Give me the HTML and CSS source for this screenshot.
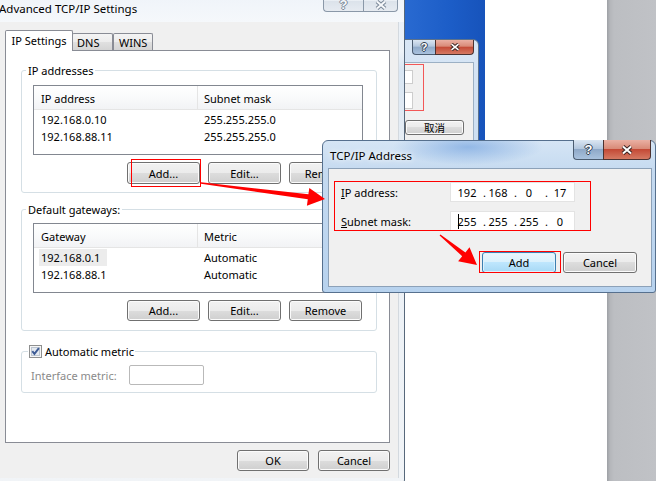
FILE: index.html
```html
<!DOCTYPE html>
<html lang="en">
<head>
<meta charset="utf-8">
<title>Advanced TCP/IP Settings</title>
<link rel="stylesheet" href="styles.css">
</head>
<body>
<div class="desk-blue"></div>
<div class="desk-gray"></div>

<div class="win win-back">
  <div class="back-title">
    <div class="caps back-caps">
      <span class="cap cap-help act-help">?</span>
      <span class="cap cap-close act-close"><svg width="12" height="8" viewBox="0 0 12 8"><path d="M2.5 1.2L9.5 6.8M9.5 1.2L2.5 6.8" stroke="#3b2321" stroke-width="3.6"/><path d="M2.5 1.2L9.5 6.8M9.5 1.2L2.5 6.8" stroke="#fff" stroke-width="1.6"/></svg></span>
    </div>
  </div>
  <div class="back-client">
    <div class="back-red">
      <div class="back-input"></div>
      <div class="back-input b2"></div>
    </div>
    <div class="btn back-btn">取消</div>
  </div>
</div>

<div class="win win-main">
  <div class="main-title">
    <span class="title">Advanced TCP/IP Settings</span>
    <div class="caps main-caps">
      <span class="cap cap-help ina-help">?</span>
      <span class="cap cap-close ina-close"><svg width="14" height="10" viewBox="0 0 14 10"><path d="M3 1.5L11 8.5M11 1.5L3 8.5" stroke="#7a8898" stroke-width="4"/><path d="M3 1.5L11 8.5M11 1.5L3 8.5" stroke="#f7f9fb" stroke-width="2"/></svg></span>
    </div>
  </div>
  <div class="main-client">
    <div class="tabs">
      <div class="tab tab-sel">IP Settings</div>
      <div class="tab tab-dns">DNS</div>
      <div class="tab tab-wins">WINS</div>
    </div>
    <div class="panel">
      <fieldset class="group g1">
        <legend>IP addresses</legend>
        <div class="gbody">
          <div class="lv">
            <div class="lv-head"><div class="c1">IP address</div><div class="c2">Subnet mask</div></div>
            <div class="lv-rows">
              <div class="lv-row"><div class="c1">192.168.0.10</div><div class="c2">255.255.255.0</div></div>
              <div class="lv-row"><div class="c1">192.168.88.11</div><div class="c2">255.255.255.0</div></div>
            </div>
          </div>
          <div class="btnrow">
            <button class="btn" type="button">Add...</button>
            <button class="btn" type="button">Edit...</button>
            <button class="btn" type="button">Remove</button>
          </div>
        </div>
      </fieldset>
      <fieldset class="group g2">
        <legend>Default gateways:</legend>
        <div class="gbody">
          <div class="lv">
            <div class="lv-head"><div class="c1">Gateway</div><div class="c2">Metric</div></div>
            <div class="lv-rows">
              <div class="lv-row"><div class="c1"><span class="sel">192.168.0.1</span></div><div class="c2">Automatic</div></div>
              <div class="lv-row"><div class="c1">192.168.88.1</div><div class="c2">Automatic</div></div>
            </div>
          </div>
          <div class="btnrow">
            <button class="btn" type="button">Add...</button>
            <button class="btn" type="button">Edit...</button>
            <button class="btn" type="button">Remove</button>
          </div>
        </div>
      </fieldset>
      <fieldset class="group g3">
        <legend><svg class="chk" width="13" height="13" viewBox="0 0 13 13"><rect x="0.5" y="0.5" width="12" height="12" fill="#f6f6f6" stroke="#8e8f8f"/><rect x="2.5" y="2.5" width="8" height="8" fill="#e4e9f0" stroke="#bcc5d0"/><path d="M3.3 6.2L5.4 8.9L9.9 3.1" fill="none" stroke="#3d5b95" stroke-width="1.9"/></svg><span>Automatic metric</span></legend>
        <div class="gbody">
          <span class="lbl">Interface metric:</span>
          <span class="metric-input"></span>
        </div>
      </fieldset>
    </div>
    <div class="dlgbtns">
      <button class="btn" type="button">OK</button>
      <button class="btn" type="button">Cancel</button>
    </div>
  </div>
</div>

<div class="win win-pop">
  <div class="pop-title">
    <span class="title">TCP/IP Address</span>
    <div class="caps pop-caps">
      <span class="cap cap-help act-help">?</span>
      <span class="cap cap-close act-close"><svg width="14" height="10" viewBox="0 0 14 10"><path d="M3 1.5L11 8.5M11 1.5L3 8.5" stroke="#3b2321" stroke-width="4"/><path d="M3 1.5L11 8.5M11 1.5L3 8.5" stroke="#fff" stroke-width="2"/></svg></span>
    </div>
  </div>
  <div class="pop-client">
    <div class="frow">
      <span class="flabel"><u>I</u>P address:</span>
      <div class="ipbox"><span class="seg">192</span><span class="dot">.</span><span class="seg">168</span><span class="dot">.</span><span class="seg">0</span><span class="dot">.</span><span class="seg">17</span></div>
    </div>
    <div class="frow">
      <span class="flabel"><u>S</u>ubnet mask:</span>
      <div class="ipbox"><span class="seg"><span class="caret"></span>255</span><span class="dot">.</span><span class="seg">255</span><span class="dot">.</span><span class="seg">255</span><span class="dot">.</span><span class="seg">0</span></div>
    </div>
    <div class="pop-btns">
      <button class="btn btn-default" type="button">Add</button>
      <button class="btn" type="button">Cancel</button>
    </div>
  </div>
</div>

<div class="mark mark-add"></div>
<div class="mark mark-fields"></div>
<div class="mark mark-popadd"></div>

<svg class="arrows" width="656" height="481" viewBox="0 0 656 481">
  <polygon fill="#ff0000" points="201,182.3 308.4,194.3 309.3,187.9 325,199 306.9,205.7 307.8,199.3 200.9,183.7"/>
  <polygon fill="#ff0000" points="440.4,234.5 465.4,252.4 469.5,247.3 477,265 458.1,261.3 462.2,256.2 439.6,235.5"/>
</svg>
</body>
</html>
```

FILE: styles.css
```css
* { box-sizing: border-box; }
html, body { margin: 0; padding: 0; }
body {
  width: 656px;
  height: 481px;
  overflow: hidden;
  position: relative;
  background: #fff;
  font-family: "Noto Sans", "Liberation Sans", sans-serif;
  font-size: 11px;
  line-height: 15px;
  color: #000;
}

/* desktop background */
.desk-blue {
  position: absolute;
  left: 400px;
  top: 0;
  width: 85px;
  height: 220px;
  background: linear-gradient(90deg, #2a6bd2, #1c5dc7 60%, #1753bb);
}
.desk-gray {
  position: absolute;
  left: 607px;
  top: 0;
  width: 49px;
  height: 481px;
  background: linear-gradient(90deg, #9da0a5 0, #b4b6ba 3px, #bcbec2 7px, #c0c2c6);
}

/* windows */
.win {
  position: absolute;
  display: flex;
  flex-direction: column;
}
.title { font-size: 11.5px; line-height: 15px; white-space: nowrap; }

/* caption buttons */
.caps { display: flex; align-items: flex-start; }
.cap {
  display: flex;
  align-items: center;
  justify-content: center;
  border: 1px solid #4b5c70;
  border-top: none;
  font-weight: 700;
  font-size: 13px;
  line-height: 13px;
  font-family: "Liberation Sans", sans-serif;
}
.cap-help { border-right: none; border-radius: 0 0 0 4px; }
.cap-close { border-radius: 0 0 4px 0; }
.act-help {
  color: #fff;
  background: linear-gradient(#dbe6f2, #b3c7de 45%, #8fa9c8 50%, #a9c2de);
  text-shadow: 1px 0 #2f3d4f, -1px 0 #2f3d4f, 0 1px #2f3d4f, 0 -1px #2f3d4f;
}
.act-close {
  background: linear-gradient(#eab0a3, #d98b78 45%, #c44a36 50%, #d57a63);
  border-color: #4c3230;
}
.ina-help {
  color: #f6f8fa;
  background: linear-gradient(#f8fafc, #e8edf3 50%, #dce3eb 50%, #e6ebf1);
  border-color: #8a98a8;
  text-shadow: 1px 0 #7a8898, -1px 0 #7a8898, 0 1px #7a8898, 0 -1px #7a8898;
  padding-top: 6px;
}
.ina-close {
  background: linear-gradient(#f8fafc, #e8edf3 50%, #dce3eb 50%, #e6ebf1);
  border-color: #8a98a8;
  padding-top: 6px;
}

/* buttons */
.btn {
  display: flex;
  align-items: center;
  justify-content: center;
  padding: 0;
  margin: 0;
  border: 1px solid #707070;
  border-radius: 3px;
  background: linear-gradient(#f2f2f2, #ebebeb 50%, #dddddd 50%, #cfcfcf);
  box-shadow: inset 0 0 0 1px #fbfbfb;
  font: inherit;
  color: #000;
}
.btn-default {
  border-color: #3c7fb1;
  background: linear-gradient(#eaf6fd, #d9f0fc 50%, #bee6fd 50%, #a7d9f5);
  box-shadow: inset 0 0 0 1px #dff2fd;
}

/* background dialog */
.win-back {
  left: 330px;
  top: 39px;
  width: 149px;
  height: 160px;
  border: 1px solid #5d728b;
  border-radius: 6px;
  padding: 0 4px 0 5px;
  background: linear-gradient(#d8e6f5, #c8dcf1);
}
.back-title { height: 22px; display: flex; justify-content: flex-end; }
.back-caps .cap { height: 15px; font-size: 11px; }
.back-caps .cap-help { width: 23px; }
.back-caps .cap-close { width: 39px; }
.back-client {
  flex: 1;
  background: #f0f0f0;
  border: 1px solid #9cb0c4;
  display: flex;
  flex-direction: column;
  align-items: flex-end;
}
.back-red {
  border: 1px solid #f25757;
  margin: 1px 49px 0 0;
  padding: 5px 10px 1px 30px;
}
.back-input { width: 30px; height: 14px; background: #fff; border: 1px solid #cdcdcd; }
.back-input.b2 { height: 17px; margin-top: 8px; }
.back-btn {
  width: 59px;
  height: 15px;
  margin: 9px 9px 0 0;
  font-family: "Noto Sans CJK SC", sans-serif;
  font-size: 10.5px;
  line-height: 13px;
}

/* main window */
.win-main {
  left: -8px;
  top: -10px;
  width: 413px;
  height: 497px;
  border: 1px solid #57687b;
  border-radius: 7px;
  padding: 0 5px 8px 7px;
  background:
    radial-gradient(ellipse 40px 9px at 228px 4px, rgba(150, 185, 225, 0.35), transparent),
    linear-gradient(#e6eef7, #eef3f8 60px, #d9e6f3 80px, #e9eff5 160px, #f1f4f7);
}
.main-title {
  height: 31px;
  display: flex;
  justify-content: space-between;
  align-items: flex-start;
  background: linear-gradient(#eef3f9, #f5f8fb);
  margin: 0 -5px 0 -7px;
  padding: 0 5px 0 7px;
}
.main-title .title { margin: 10px 0 0 -1px; }
.main-caps { margin: 1px 1px 0 0; }
.main-caps .cap { height: 20px; }
.main-caps .cap-help { width: 40px; }
.main-caps .cap-close { width: 35px; }

.main-client {
  flex: 1;
  background: #f0f0f0;
  border-right: 1px solid #d3d9df;
  display: flex;
  flex-direction: column;
  padding: 8px 8px 0 5px;
}

/* tabs */
.tabs { display: flex; align-items: flex-end; height: 20px; }
.tab {
  height: 17px;
  border: 1px solid #898c95;
  border-bottom: none;
  background: linear-gradient(#f4f4f4, #ececec 50%, #e0e0e0 50%, #d4d4d4);
  display: flex;
  align-items: center;
  padding-left: 4px;
  border-radius: 2px 2px 0 0;
}
.tab-sel {
  position: relative;
  z-index: 2;
  width: 68px;
  height: 21px;
  margin-bottom: -1px;
  padding: 0 0 1px 0;
  justify-content: center;
  background: #fff;
}
.tab-dns { width: 41px; margin-left: -1px; }
.tab-wins { width: 40px; padding-left: 5px; }

.panel {
  height: 393px;
  border: 1px solid #898c95;
  background: #fff;
  padding: 0 0 0 15px;
}

/* group boxes */
.group {
  width: 356px;
  min-width: 0;
  margin: 12px 0 0 0;
  padding: 0;
  border: 1px solid #d5dfe5;
  border-radius: 3px;
}
.group legend { margin-left: 4px; padding: 0 2px; line-height: 15px; }
.g2 { margin-top: 9px; }
.g3 { margin-top: 13px; }
.gbody { padding: 7px 13px 8px 11px; }
.g2 .gbody { padding: 6px 13px 9px 11px; }

.lv { height: 70px; border: 1px solid #828790; background: #fff; }
.lv-head {
  display: flex;
  height: 24px;
  border-bottom: 1px solid #e5e5e5;
  background: linear-gradient(#ffffff, #f9fafb 50%, #f2f3f5);
}
.lv-head > div { display: flex; align-items: center; padding-top: 1px; }
.lv-head .c1 { border-right: 1px solid #e5e5e5; }
.c1 { width: 164px; padding-left: 7px; flex: none; }
.c2 { padding-left: 6px; }
.lv-rows { padding-top: 1px; }
.lv-row { display: flex; height: 17px; align-items: center; }
.lv-row > div { display: flex; align-items: center; height: 17px; }
.sel { background: #ececec; margin-left: -2px; padding: 1px 7px 1px 2px; }

.btnrow { display: flex; justify-content: flex-end; gap: 8px; margin: 7px 1px 0 0; }
.btnrow .btn { width: 73px; height: 22px; }
.g2 .btnrow .btn { height: 21px; }

.g3 legend {
  margin-left: 6px;
  padding: 0 1px;
  display: flex;
  align-items: center;
  gap: 3px;
}
.chk { display: block; }
.g3 .gbody { display: flex; align-items: center; padding: 6px 0 7px 9px; }
.lbl { width: 98px; color: #8a8a8a; }
.metric-input {
  width: 75px;
  height: 20px;
  border: 1px solid #b9b9b9;
  border-radius: 2px;
  background: #fff;
}

.dlgbtns { display: flex; justify-content: flex-end; gap: 9px; margin-top: 7px; }
.dlgbtns .btn { width: 72px; height: 21px; }

/* popup dialog */
.win-pop {
  left: 322px;
  top: 140px;
  width: 334px;
  height: 153px;
  border: 1px solid #56708e;
  border-radius: 6px 6px 3px 3px;
  padding: 0 3px 5px 5px;
  background:
    radial-gradient(ellipse 75px 18px at 145px 6px, rgba(105, 155, 220, 0.6), transparent),
    linear-gradient(#d5e5f5, #c5daf0 30px, #b7d2ee);
}
.pop-title { height: 27px; display: flex; justify-content: space-between; align-items: flex-start; }
.pop-title .title { margin: 7px 0 0 2px; text-shadow: 0 0 5px #fff, 0 0 9px #fff; }
.pop-caps { margin: -1px 1px 0 0; }
.pop-caps .cap { height: 20px; }
.pop-caps .cap-help { width: 30px; }
.pop-caps .cap-close { width: 48px; }

.pop-client {
  flex: 1;
  background: #f0f0f0;
  border: 1px solid #8ca1b8;
  padding: 13px 14px 0 12px;
}
.frow { display: flex; align-items: center; height: 20px; }
.frow + .frow { margin-top: 9px; }
.flabel { width: 109px; flex: none; }
.ipbox {
  width: 125px;
  height: 20px;
  background: #fff;
  border: 1px solid #e3e3e3;
  display: flex;
  align-items: center;
  padding-left: 4px;
}
.seg { width: 24px; text-align: center; display: flex; justify-content: center; align-items: center; }
.dot { width: 7px; text-align: right; }
.caret { display: inline-block; width: 1px; height: 15px; background: #000; margin-right: -1px; }
.pop-btns { display: flex; justify-content: flex-end; gap: 7px; margin-top: 21px; }
.pop-btns .btn { width: 74px; height: 21px; }

/* annotation overlays */
.mark { position: absolute; border: 1px solid #ff0000; }
.mark-add { left: 131px; top: 159px; width: 70px; height: 28px; }
.mark-fields { left: 334px; top: 181px; width: 257px; height: 50px; }
.mark-popadd { left: 479px; top: 251px; width: 82px; height: 22px; }
.arrows { position: absolute; left: 0; top: 0; pointer-events: none; }
```
